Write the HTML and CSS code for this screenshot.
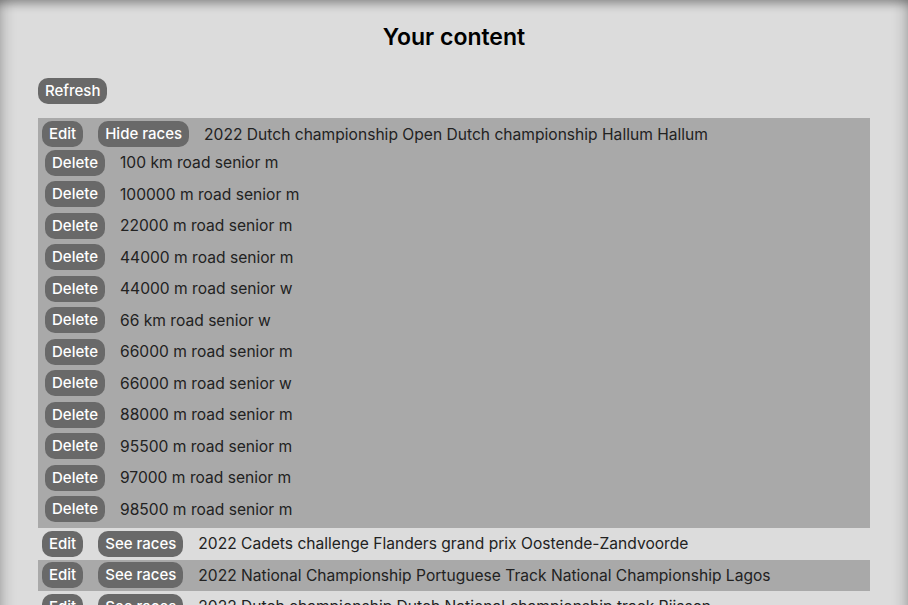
FILE: index.html
```html
<!DOCTYPE html>
<html>
<head>
<meta charset="utf-8">
<title>Your content</title>
<link rel="stylesheet" href="styles.css">
</head>
<body>
<div class="page">
  <h1 class="title">Your content</h1>
  <div class="toolbar"><button class="btn">Refresh</button></div>
  <div class="list">
    <div class="event odd open">
      <div class="event-head">
        <button class="btn">Edit</button>
        <button class="btn">Hide races</button>
        <span class="event-name">2022 Dutch championship Open Dutch championship Hallum Hallum</span>
      </div>
      <div class="races">
        <div class="race"><button class="btn">Delete</button><span class="race-name">100 km road senior m</span></div>
        <div class="race"><button class="btn">Delete</button><span class="race-name">100000 m road senior m</span></div>
        <div class="race"><button class="btn">Delete</button><span class="race-name">22000 m road senior m</span></div>
        <div class="race"><button class="btn">Delete</button><span class="race-name">44000 m road senior m</span></div>
        <div class="race"><button class="btn">Delete</button><span class="race-name">44000 m road senior w</span></div>
        <div class="race"><button class="btn">Delete</button><span class="race-name">66 km road senior w</span></div>
        <div class="race"><button class="btn">Delete</button><span class="race-name">66000 m road senior m</span></div>
        <div class="race"><button class="btn">Delete</button><span class="race-name">66000 m road senior w</span></div>
        <div class="race"><button class="btn">Delete</button><span class="race-name">88000 m road senior m</span></div>
        <div class="race"><button class="btn">Delete</button><span class="race-name">95500 m road senior m</span></div>
        <div class="race"><button class="btn">Delete</button><span class="race-name">97000 m road senior m</span></div>
        <div class="race"><button class="btn">Delete</button><span class="race-name">98500 m road senior m</span></div>
      </div>
    </div>
    <div class="event">
      <div class="event-head">
        <button class="btn">Edit</button>
        <button class="btn">See races</button>
        <span class="event-name">2022 Cadets challenge Flanders grand prix Oostende-Zandvoorde</span>
      </div>
    </div>
    <div class="event odd">
      <div class="event-head">
        <button class="btn">Edit</button>
        <button class="btn">See races</button>
        <span class="event-name">2022 National Championship Portuguese Track National Championship Lagos</span>
      </div>
    </div>
    <div class="event">
      <div class="event-head">
        <button class="btn">Edit</button>
        <button class="btn">See races</button>
        <span class="event-name">2022 Dutch championship Dutch National championship track Rijssen</span>
      </div>
    </div>
  </div>
</div>
</body>
</html>
```
FILE: styles.css
```css
html, body {
  margin: 0;
  padding: 0;
  background: #dcdcdc;
  overflow: hidden;
}
.page {
  min-height: 100vh;
  box-sizing: border-box;
  padding: 1px 38px 20px;
  font-family: Inter, "Noto Sans", sans-serif;
  color: #222;
  box-shadow: inset 0 8px 10px -4px rgba(0,0,0,0.35), inset 14px 0 14px -10px rgba(0,0,0,0.18), inset -14px 0 14px -10px rgba(0,0,0,0.18);
}
.title {
  margin: 21px 0 0;
  text-align: center;
  font-size: 23px;
  font-weight: 600;
  line-height: 30px;
  color: #000;
}
.toolbar {
  margin-top: 26px;
  height: 26px;
  display: flex;
}
.btn {
  height: 26px;
  padding: 0 7px;
  border: none;
  border-radius: 10px;
  background: #696969;
  color: #fff;
  font-family: Inter, "Noto Sans", sans-serif;
  font-size: 15px;
  font-weight: 500;
  line-height: 26px;
  cursor: pointer;
  white-space: nowrap;
}
.list {
  margin-top: 14px;
}
.event.odd {
  background: #a9a9a9;
}
.event-head {
  height: 31.5px;
  box-sizing: border-box;
  display: flex;
  align-items: center;
  padding-left: 4px;
  gap: 15px;
}
.event.open > .event-head {
  height: 29px;
  padding-top: 3px;
}
.event-name {
  font-size: 15.6px;
  white-space: nowrap;
}
.races {
  padding-bottom: 3px;
}
.race {
  height: 31.5px;
  display: flex;
  align-items: center;
  padding-left: 7px;
  gap: 15px;
}
.race-name {
  font-size: 15.6px;
  white-space: nowrap;
}
```
